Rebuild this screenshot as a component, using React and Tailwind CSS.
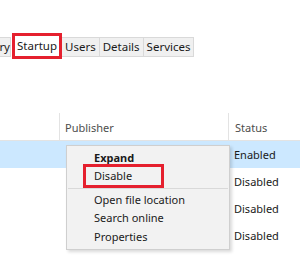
export default function App() {
    const tabs = ['Users', 'Details', 'Services'];
    const rows = ['Enabled', 'Disabled', 'Disabled', 'Disabled'];

    return (
        <div className="relative w-[300px] h-[255px] overflow-hidden bg-white text-[11px] text-[#1a1a1a]" style={{ fontFamily: '"Noto Sans", "Open Sans", sans-serif' }}>
            {/* tab strip */}
            <div className="flex items-end h-[57px] text-[11.5px]">
                <div className="h-[20px] w-[11px] bg-[#f0f0f0] border-y border-r border-[#d9d9d9] flex justify-end leading-[18px]">
                    <span>ry</span>
                </div>
                <div className="h-[26px] w-[50px] ml-[1px] border-[3px] border-[#e5202e] bg-white flex items-center justify-center leading-none mb-[-2px]">
                    <span>Startup</span>
                </div>
                {tabs.map((t) => (
                    <div key={t} className="h-[20px] px-[3px] bg-[#f0f0f0] border-y border-r border-[#d9d9d9] leading-[18px]">
                        {t}
                    </div>
                ))}
            </div>

            {/* column header */}
            <div className="mt-[56px] flex h-[28px] border-b border-[#e3e3e3] text-[#4d4d4d]">
                <div className="w-[60px] border-r border-[#e3e3e3]"></div>
                <div className="w-[169px] border-r border-[#e3e3e3] pl-[5px] pt-[7px]">Publisher</div>
                <div className="flex-1 pl-[6px] pt-[7px]">Status</div>
            </div>

            {/* rows */}
            <div className="flex flex-col">
                {rows.map((r, i) => (
                    <div key={i} className={`flex h-[27px] items-center ${i === 0 ? 'bg-[#cce8ff]' : ''}`}>
                        <div className="w-[229px]"></div>
                        <div className="pl-[5px] pt-[1px]">{r}</div>
                    </div>
                ))}
            </div>

            {/* context menu */}
            <div className="absolute left-[66px] top-[145px] w-[164px] h-[105px] bg-[#f2f2f2] border border-[#cfcfcf] shadow-[2px_2px_3px_rgba(0,0,0,0.15)] pt-[3px]">
                <div className="h-[18px] pl-[27px] font-bold leading-[18px]">Expand</div>
                <div className="relative h-[18px] pl-[27px] leading-[18px]">
                    Disable
                    <div className="absolute left-[16px] top-[-3px] w-[81px] h-[24px] border-[3px] border-[#e5202e]"></div>
                </div>
                <div className="h-[1px] mx-[1px] mt-[3px] mb-[2px] bg-[#d9d9d9]"></div>
                <div className="h-[18px] pl-[27px] leading-[18px]">Open file location</div>
                <div className="h-[18px] pl-[27px] leading-[18px]">Search online</div>
                <div className="h-[19px] pl-[27px] leading-[20px]">Properties</div>
            </div>
        </div>
    );
}
